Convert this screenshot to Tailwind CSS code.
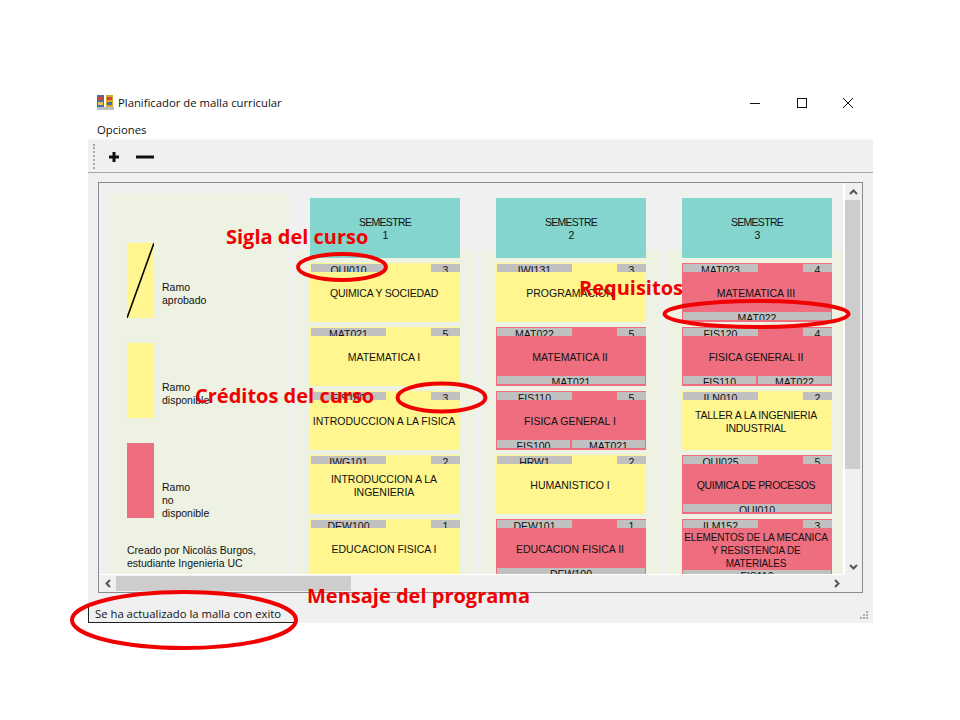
<!DOCTYPE html>
<html lang="en">
<head>
  <meta charset="UTF-8" />
  <title>Planificador de malla curricular</title>
  <script src="https://cdn.jsdelivr.net/npm/@tailwindcss/browser@4"></script>
</head>
<body class="bg-white w-[960px] h-[720px] overflow-hidden relative font-['Liberation_Sans',sans-serif] text-[10.5px] leading-[13px] text-[#111]">
  <!-- Window -->
  <div class="absolute left-[88px] top-[85px] w-[785px] h-[538px] flex flex-col bg-white">
    <!-- Title bar -->
    <div class="h-[35px] flex items-center pl-[9px] shrink-0 font-['Open_Sans',sans-serif] text-[11.3px]">
      <svg width="17" height="15" viewBox="0 0 17 15" class="mr-[4px]">
        <rect x="0" y="0" width="7" height="12" fill="#4a6f9a"/>
        <rect x="9" y="0" width="7" height="12" fill="#d9a62e"/>
        <rect x="1" y="2" width="5" height="3" fill="#c9443a"/>
        <rect x="10" y="2" width="5" height="3" fill="#c9443a"/>
        <rect x="1" y="7" width="5" height="3" fill="#e6c75a"/>
        <rect x="10" y="7" width="5" height="3" fill="#3f6da8"/>
        <rect x="0" y="12" width="17" height="3" fill="#b8c0c4"/>
      </svg>
      <span>Planificador de malla curricular</span>
      <div class="ml-auto flex items-center">
        <svg width="120" height="14" viewBox="0 0 120 14" class="mr-[5px]">
          <path d="M2 7.5H12" stroke="#111" stroke-width="1"/>
          <rect x="49.5" y="2.5" width="9" height="9" fill="none" stroke="#111"/>
          <path d="M95 2L105 12M105 2L95 12" stroke="#111" stroke-width="1"/>
        </svg>
      </div>
    </div>
    <!-- Menu -->
    <div class="h-[18px] pl-[9px] flex items-center shrink-0 font-['Open_Sans',sans-serif] text-[11.3px]">Opciones</div>
    <!-- Toolbar -->
    <div class="h-[34px] mt-[1px] bg-[#f0f0f0] border-t border-t-[#f8f8f8] border-b border-b-[#a8a8a8] flex items-center pl-[5px] shrink-0">
      <div class="w-[2px] h-[25px] border-l-2 border-dotted border-[#a8a8a8]"></div>
      <svg width="60" height="16" viewBox="0 0 60 16" class="ml-[12px] mt-[2px]">
        <path d="M2 8H12M7 3V13" stroke="#111" stroke-width="3"/>
        <path d="M29 8H47" stroke="#111" stroke-width="3"/>
      </svg>
    </div>
    <!-- Body -->
    <div class="flex-1 bg-[#f0f0f0] relative flex flex-col">
      <div class="mt-[9px] ml-[10px] w-[765px] h-[411px] border border-[#8a8a90] flex flex-col">
        <div class="flex h-[392px]">
          <!-- Scroll area -->
          <div class="w-[746px] h-[392px] overflow-hidden flex items-start pl-[10px] border-r-2 border-b border-white">
            <!-- Legend -->
            <div class="w-[180px] h-[392px] mt-[10px] bg-[#edf2e3] shrink-0 pl-[18px] pt-[50px]">
              <div class="flex gap-[8px] h-[75px]">
                <svg width="27" height="75" viewBox="0 0 27 75" class="shrink-0">
                  <rect width="27" height="75" fill="#fff68f"/>
                  <path d="M27 0L0 75" stroke="#000" stroke-width="1.6"/>
                </svg>
                <div class="pt-[38px]">Ramo<br>aprobado</div>
              </div>
              <div class="flex gap-[8px] h-[75px] mt-[25px]">
                <div class="w-[27px] h-[75px] bg-[#fff68f] shrink-0"></div>
                <div class="pt-[38px]">Ramo<br>disponible</div>
              </div>
              <div class="flex gap-[8px] h-[75px] mt-[25px]">
                <div class="w-[27px] h-[75px] bg-[#ee6e7f] shrink-0"></div>
                <div class="pt-[38px]">Ramo<br>no<br>disponible</div>
              </div>
              <div class="mt-[26px]">Creado por Nicolás Burgos,<br>estudiante Ingenieria UC</div>
            </div>

            <!-- Semestre 1 -->
            <div class="w-[180px] ml-[6px] shrink-0 flex flex-col items-center">
              <div class="relative z-10 w-[150px] h-[60px] mt-[15px] bg-[#83d5ce] text-center pt-[18px] tracking-[-0.7px]">SEMESTRE<br>1</div>
              <div class="w-[180px] -mt-[8px] pt-[13px] h-[400px] bg-[#edf2e3] flex flex-col items-center gap-[5px]">
                <div class="w-[150px] h-[59px] shrink-0 bg-[#fff68f] flex flex-col">
                  <div class="flex justify-between h-[8px] mt-[1px] pl-[1px] shrink-0"><div class="w-[75px] bg-[#c0c0c0] text-center overflow-hidden">QUI010</div><div class="w-[29px] bg-[#c0c0c0] text-center overflow-hidden">3</div></div>
                  <div class="flex-1 flex items-center justify-center text-center pb-[7px] pr-[2px] tracking-[-0.2px]">QUIMICA Y SOCIEDAD</div>
                </div>
                <div class="w-[150px] h-[59px] shrink-0 bg-[#fff68f] flex flex-col">
                  <div class="flex justify-between h-[8px] mt-[1px] pl-[1px] shrink-0"><div class="w-[75px] bg-[#c0c0c0] text-center overflow-hidden">MAT021</div><div class="w-[29px] bg-[#c0c0c0] text-center overflow-hidden">5</div></div>
                  <div class="flex-1 flex items-center justify-center text-center pb-[7px] pr-[2px]">MATEMATICA I</div>
                </div>
                <div class="w-[150px] h-[59px] shrink-0 bg-[#fff68f] flex flex-col">
                  <div class="flex justify-between h-[8px] mt-[1px] pl-[1px] shrink-0"><div class="w-[75px] bg-[#c0c0c0] text-center overflow-hidden">FIS100</div><div class="w-[29px] bg-[#c0c0c0] text-center overflow-hidden">3</div></div>
                  <div class="flex-1 flex items-center justify-center text-center pb-[7px] pr-[2px]">INTRODUCCION A LA FISICA</div>
                </div>
                <div class="w-[150px] h-[59px] shrink-0 bg-[#fff68f] flex flex-col">
                  <div class="flex justify-between h-[8px] mt-[1px] pl-[1px] shrink-0"><div class="w-[75px] bg-[#c0c0c0] text-center overflow-hidden">IWG101</div><div class="w-[29px] bg-[#c0c0c0] text-center overflow-hidden">2</div></div>
                  <div class="flex-1 flex items-center justify-center text-center pb-[7px] pr-[2px]">INTRODUCCION A LA<br>INGENIERIA</div>
                </div>
                <div class="w-[150px] h-[59px] shrink-0 bg-[#fff68f] flex flex-col">
                  <div class="flex justify-between h-[8px] mt-[1px] pl-[1px] shrink-0"><div class="w-[75px] bg-[#c0c0c0] text-center overflow-hidden">DEW100</div><div class="w-[29px] bg-[#c0c0c0] text-center overflow-hidden">1</div></div>
                  <div class="flex-1 flex items-center justify-center text-center pb-[7px] pr-[2px]">EDUCACION FISICA I</div>
                </div>
              </div>
            </div>

            <!-- Semestre 2 -->
            <div class="w-[180px] ml-[6px] shrink-0 flex flex-col items-center">
              <div class="relative z-10 w-[150px] h-[60px] mt-[15px] bg-[#83d5ce] text-center pt-[18px] tracking-[-0.7px]">SEMESTRE<br>2</div>
              <div class="w-[180px] -mt-[8px] pt-[13px] h-[400px] bg-[#edf2e3] flex flex-col items-center gap-[5px]">
                <div class="w-[150px] h-[59px] shrink-0 bg-[#fff68f] flex flex-col">
                  <div class="flex justify-between h-[8px] mt-[1px] pl-[1px] shrink-0"><div class="w-[75px] bg-[#c0c0c0] text-center overflow-hidden">IWI131</div><div class="w-[29px] bg-[#c0c0c0] text-center overflow-hidden">3</div></div>
                  <div class="flex-1 flex items-center justify-center text-center pb-[7px] pr-[2px]">PROGRAMACION</div>
                </div>
                <div class="w-[150px] h-[59px] shrink-0 bg-[#ee6e7f] flex flex-col">
                  <div class="flex justify-between h-[8px] mt-[1px] pl-[1px] shrink-0"><div class="w-[75px] bg-[#c0c0c0] text-center overflow-hidden">MAT022</div><div class="w-[29px] bg-[#c0c0c0] text-center overflow-hidden">5</div></div>
                  <div class="flex-1 flex items-center justify-center text-center pt-[3px] pr-[2px]">MATEMATICA II</div>
                  <div class="flex h-[8px] mx-[1px] mb-[2px] shrink-0"><div class="flex-1 bg-[#c0c0c0] text-center overflow-hidden">MAT021</div></div>
                </div>
                <div class="w-[150px] h-[59px] shrink-0 bg-[#ee6e7f] flex flex-col">
                  <div class="flex justify-between h-[8px] mt-[1px] pl-[1px] shrink-0"><div class="w-[75px] bg-[#c0c0c0] text-center overflow-hidden">FIS110</div><div class="w-[29px] bg-[#c0c0c0] text-center overflow-hidden">5</div></div>
                  <div class="flex-1 flex items-center justify-center text-center pt-[3px] pr-[2px]">FISICA GENERAL I</div>
                  <div class="flex gap-[2px] h-[8px] mx-[1px] mb-[2px] shrink-0"><div class="flex-1 bg-[#c0c0c0] text-center overflow-hidden">FIS100</div><div class="flex-1 bg-[#c0c0c0] text-center overflow-hidden">MAT021</div></div>
                </div>
                <div class="w-[150px] h-[59px] shrink-0 bg-[#fff68f] flex flex-col">
                  <div class="flex justify-between h-[8px] mt-[1px] pl-[1px] shrink-0"><div class="w-[75px] bg-[#c0c0c0] text-center overflow-hidden">HRW1</div><div class="w-[29px] bg-[#c0c0c0] text-center overflow-hidden">2</div></div>
                  <div class="flex-1 flex items-center justify-center text-center pb-[7px] pr-[2px]">HUMANISTICO I</div>
                </div>
                <div class="w-[150px] h-[59px] shrink-0 bg-[#ee6e7f] flex flex-col">
                  <div class="flex justify-between h-[8px] mt-[1px] pl-[1px] shrink-0"><div class="w-[75px] bg-[#c0c0c0] text-center overflow-hidden">DEW101</div><div class="w-[29px] bg-[#c0c0c0] text-center overflow-hidden">1</div></div>
                  <div class="flex-1 flex items-center justify-center text-center pt-[3px] pr-[2px]">EDUCACION FISICA II</div>
                  <div class="flex h-[8px] mx-[1px] mb-[2px] shrink-0"><div class="flex-1 bg-[#c0c0c0] text-center overflow-hidden">DEW100</div></div>
                </div>
              </div>
            </div>

            <!-- Semestre 3 -->
            <div class="w-[180px] ml-[6px] shrink-0 flex flex-col items-center">
              <div class="relative z-10 w-[150px] h-[60px] mt-[15px] bg-[#83d5ce] text-center pt-[18px] tracking-[-0.7px]">SEMESTRE<br>3</div>
              <div class="w-[180px] -mt-[8px] pt-[13px] h-[400px] bg-[#edf2e3] flex flex-col items-center gap-[5px]">
                <div class="w-[150px] h-[59px] shrink-0 bg-[#ee6e7f] flex flex-col">
                  <div class="flex justify-between h-[8px] mt-[1px] pl-[1px] shrink-0"><div class="w-[75px] bg-[#c0c0c0] text-center overflow-hidden">MAT023</div><div class="w-[29px] bg-[#c0c0c0] text-center overflow-hidden">4</div></div>
                  <div class="flex-1 flex items-center justify-center text-center pt-[3px] pr-[2px]">MATEMATICA III</div>
                  <div class="flex h-[8px] mx-[1px] mb-[2px] shrink-0"><div class="flex-1 bg-[#c0c0c0] text-center overflow-hidden">MAT022</div></div>
                </div>
                <div class="w-[150px] h-[59px] shrink-0 bg-[#ee6e7f] flex flex-col">
                  <div class="flex justify-between h-[8px] mt-[1px] pl-[1px] shrink-0"><div class="w-[75px] bg-[#c0c0c0] text-center overflow-hidden">FIS120</div><div class="w-[29px] bg-[#c0c0c0] text-center overflow-hidden">4</div></div>
                  <div class="flex-1 flex items-center justify-center text-center pt-[3px] pr-[2px]">FISICA GENERAL II</div>
                  <div class="flex gap-[2px] h-[8px] mx-[1px] mb-[2px] shrink-0"><div class="flex-1 bg-[#c0c0c0] text-center overflow-hidden">FIS110</div><div class="flex-1 bg-[#c0c0c0] text-center overflow-hidden">MAT022</div></div>
                </div>
                <div class="w-[150px] h-[59px] shrink-0 bg-[#fff68f] flex flex-col">
                  <div class="flex justify-between h-[8px] mt-[1px] pl-[1px] shrink-0"><div class="w-[75px] bg-[#c0c0c0] text-center overflow-hidden">ILN010</div><div class="w-[29px] bg-[#c0c0c0] text-center overflow-hidden">2</div></div>
                  <div class="flex-1 flex items-center justify-center text-center pb-[7px] pr-[2px] tracking-[-0.2px]">TALLER A LA INGENIERIA<br>INDUSTRIAL</div>
                </div>
                <div class="w-[150px] h-[59px] shrink-0 bg-[#ee6e7f] flex flex-col">
                  <div class="flex justify-between h-[8px] mt-[1px] pl-[1px] shrink-0"><div class="w-[75px] bg-[#c0c0c0] text-center overflow-hidden">QUI025</div><div class="w-[29px] bg-[#c0c0c0] text-center overflow-hidden">5</div></div>
                  <div class="flex-1 flex items-center justify-center text-center pt-[3px] pr-[2px] tracking-[-0.3px]">QUIMICA DE PROCESOS</div>
                  <div class="flex h-[8px] mx-[1px] mb-[2px] shrink-0"><div class="flex-1 bg-[#c0c0c0] text-center overflow-hidden">QUI010</div></div>
                </div>
                <div class="w-[150px] h-[59px] shrink-0 bg-[#ee6e7f] flex flex-col">
                  <div class="flex justify-between h-[8px] mt-[1px] pl-[1px] shrink-0"><div class="w-[75px] bg-[#c0c0c0] text-center overflow-hidden">ILM152</div><div class="w-[29px] bg-[#c0c0c0] text-center overflow-hidden">3</div></div>
                  <div class="flex-1 flex items-center justify-center text-center pt-[3px] pr-[2px] whitespace-nowrap text-[10px] tracking-[-0.2px]">ELEMENTOS DE LA MECANICA<br>Y RESISTENCIA DE<br>MATERIALES</div>
                  <div class="flex h-[8px] mx-[1px] mb-[2px] shrink-0"><div class="flex-1 bg-[#c0c0c0] text-center overflow-hidden">FIS110</div></div>
                </div>
              </div>
            </div>
          </div>
          <!-- Vertical scrollbar -->
          <div class="w-[17px] h-[392px] bg-[#f0f0f0] flex flex-col shrink-0">
            <div class="h-[17px] flex items-center justify-center">
              <svg width="9" height="6" viewBox="0 0 9 6"><path d="M1 5L4.5 1.5L8 5" fill="none" stroke="#555" stroke-width="2"/></svg>
            </div>
            <div class="w-[15px] h-[269px] bg-[#cdcdcd]"></div>
            <div class="flex-1 flex items-end justify-center pb-[5px]">
              <svg width="9" height="6" viewBox="0 0 9 6"><path d="M1 1L4.5 4.5L8 1" fill="none" stroke="#555" stroke-width="2"/></svg>
            </div>
          </div>
        </div>
        <!-- Horizontal scrollbar -->
        <div class="h-[17px] bg-[#f0f0f0] flex items-center shrink-0">
          <div class="w-[17px] flex items-center justify-center">
            <svg width="6" height="9" viewBox="0 0 6 9"><path d="M5 1L1.5 4.5L5 8" fill="none" stroke="#555" stroke-width="2"/></svg>
          </div>
          <div class="w-[235px] h-[15px] bg-[#cdcdcd]"></div>
          <div class="ml-auto mr-[22px] flex">
            <svg width="6" height="9" viewBox="0 0 6 9"><path d="M1 1L4.5 4.5L1 8" fill="none" stroke="#555" stroke-width="2"/></svg>
          </div>
        </div>
      </div>
      <!-- Status -->
      <div class="mt-auto relative h-[18px] w-[207px] border-l border-b border-[#222] pl-[6px] flex items-center font-['Open_Sans',sans-serif] text-[11.3px]">Se ha actualizado la malla con exito</div>
      <svg width="10" height="10" viewBox="0 0 10 10" class="absolute right-[4px] bottom-[3px]" fill="#b0b0b0">
        <rect x="7" y="1" width="2" height="2"/><rect x="4" y="4" width="2" height="2"/><rect x="7" y="4" width="2" height="2"/><rect x="1" y="7" width="2" height="2"/><rect x="4" y="7" width="2" height="2"/><rect x="7" y="7" width="2" height="2"/>
      </svg>
    </div>
  </div>

  <!-- Red annotations -->
  <svg width="960" height="720" viewBox="0 0 960 720" class="absolute left-0 top-0 z-20" fill="none" stroke="#f00000" stroke-width="4">
    <ellipse cx="342" cy="267" rx="44" ry="13"/>
    <ellipse cx="756.5" cy="314" rx="92" ry="13"/>
    <ellipse cx="441.5" cy="397.5" rx="44" ry="14"/>
    <ellipse cx="184" cy="620" rx="112" ry="28"/>
  </svg>
  <div class="absolute z-30 left-[226px] top-[223px] font-['Open_Sans',sans-serif] font-bold text-[20px] leading-[28px] text-[#f00000] whitespace-nowrap">Sigla del curso</div>
  <div class="absolute z-30 left-[579px] top-[274px] font-['Open_Sans',sans-serif] font-bold text-[20px] leading-[28px] text-[#f00000] whitespace-nowrap">Requisitos</div>
  <div class="absolute z-30 left-[195px] top-[382px] font-['Open_Sans',sans-serif] font-bold text-[20px] leading-[28px] text-[#f00000] whitespace-nowrap">Créditos del curso</div>
  <div class="absolute z-30 left-[307px] top-[582px] font-['Open_Sans',sans-serif] font-bold text-[20px] leading-[28px] text-[#f00000] whitespace-nowrap">Mensaje del programa</div>
</body>
</html>
